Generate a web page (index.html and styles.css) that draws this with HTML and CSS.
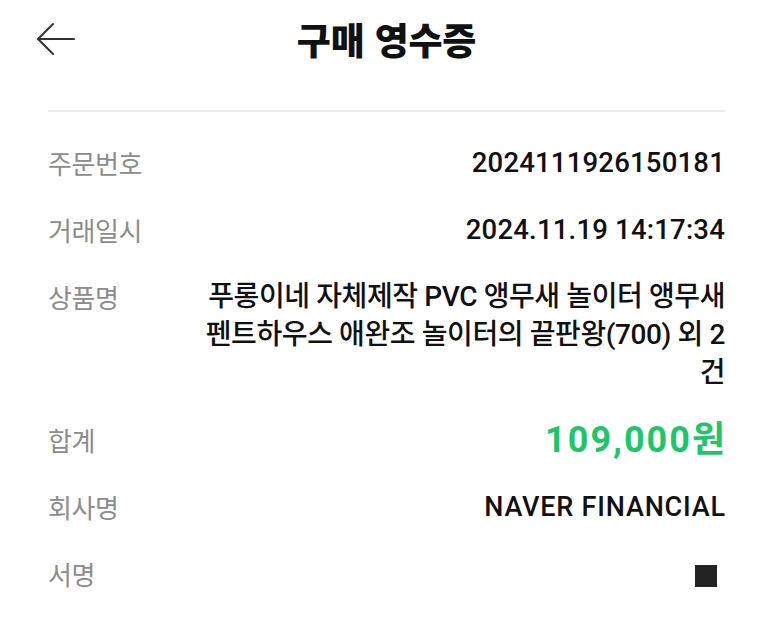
FILE: index.html
```html
<!DOCTYPE html>
<html lang="ko">
<head>
<meta charset="utf-8">
<link rel="stylesheet" href="styles.css">
</head>
<body>
<div class="page">
  <header class="header">
    <div class="back">
      <svg width="40" height="34" viewBox="0 0 40 34" fill="none" stroke="#333" stroke-width="2" stroke-linecap="round" stroke-linejoin="round">
        <path d="M2 17 H38"/>
        <path d="M17 2 L2 17 L17 32"/>
      </svg>
    </div>
    <h1 class="title">구매 영수증</h1>
    <div></div>
  </header>
  <div class="content">
    <div class="divider"></div>
    <dl class="rows">
      <div class="row">
        <dt class="label">주문번호</dt>
        <dd class="value num">2024111926150181</dd>
      </div>
      <div class="row">
        <dt class="label">거래일시</dt>
        <dd class="value num">2024.11.19 14:17:34</dd>
      </div>
      <div class="row">
        <dt class="label">상품명</dt>
        <dd class="value product">푸롱이네 자체제작 PVC 앵무새 놀이터 앵무새 펜트하우스 애완조 놀이터의 끝판왕(700) 외 2<wbr>건</dd>
      </div>
      <div class="row">
        <dt class="label">합계</dt>
        <dd class="value total">109,000원</dd>
      </div>
      <div class="row">
        <dt class="label">회사명</dt>
        <dd class="value company">NAVER FINANCIAL</dd>
      </div>
      <div class="row">
        <dt class="label">서명</dt>
        <dd class="value"><span class="sign"></span></dd>
      </div>
    </dl>
  </div>
</div>
</body>
</html>
```
FILE: styles.css
```css
* { box-sizing: border-box; }
html, body { margin: 0; padding: 0; background: #fff; }
body {
  font-family: Roboto, "Noto Sans CJK KR", sans-serif;
  color: #111;
}
.page { width: 773px; }
.header {
  display: grid;
  grid-template-columns: 1fr auto 1fr;
  align-items: center;
  height: 75px;
  padding-top: 2px;
}
.back { padding-left: 36px; display: flex; align-items: center; }
.back svg { display: block; }
.title {
  margin: 0;
  font-family: "Noto Sans CJK KR", sans-serif;
  font-weight: 900;
  font-size: 37px;
  line-height: 40px;
  color: #111;
  letter-spacing: -0.2px;
}
.content { padding: 0 48px; }
.divider { height: 2px; background: #ececec; margin-top: 35px; }
.rows { margin: 32px 0 0; padding: 0; display: flex; flex-direction: column; gap: 29px; }
.row { display: flex; justify-content: space-between; align-items: flex-start; gap: 40px; }
.label {
  font-family: "Noto Sans CJK KR", sans-serif;
  font-size: 26px;
  line-height: 38px;
  color: #8c8c8c;
  white-space: nowrap;
  margin: 0;
  flex: none;
  letter-spacing: -0.4px;
}
.value {
  margin: 0;
  font-size: 26px;
  line-height: 38px;
  text-align: right;
  font-weight: 500;
  color: #111;
}
.num { font-size: 27.5px; letter-spacing: 0.2px; }
.product {
  max-width: 520px;
  font-size: 28px;
  letter-spacing: -0.4px;
  word-break: keep-all;
}
.total {
  color: #1ec66b;
  font-size: 36px;
  font-weight: 700;
  letter-spacing: 2px;
  margin-right: -2px;
}
.company { font-size: 27px; letter-spacing: 0.8px; margin-right: -0.8px; }
.sign {
  display: inline-block;
  width: 22px;
  height: 22px;
  background: #222;
  margin-right: 8px;
  vertical-align: middle;
}
```
